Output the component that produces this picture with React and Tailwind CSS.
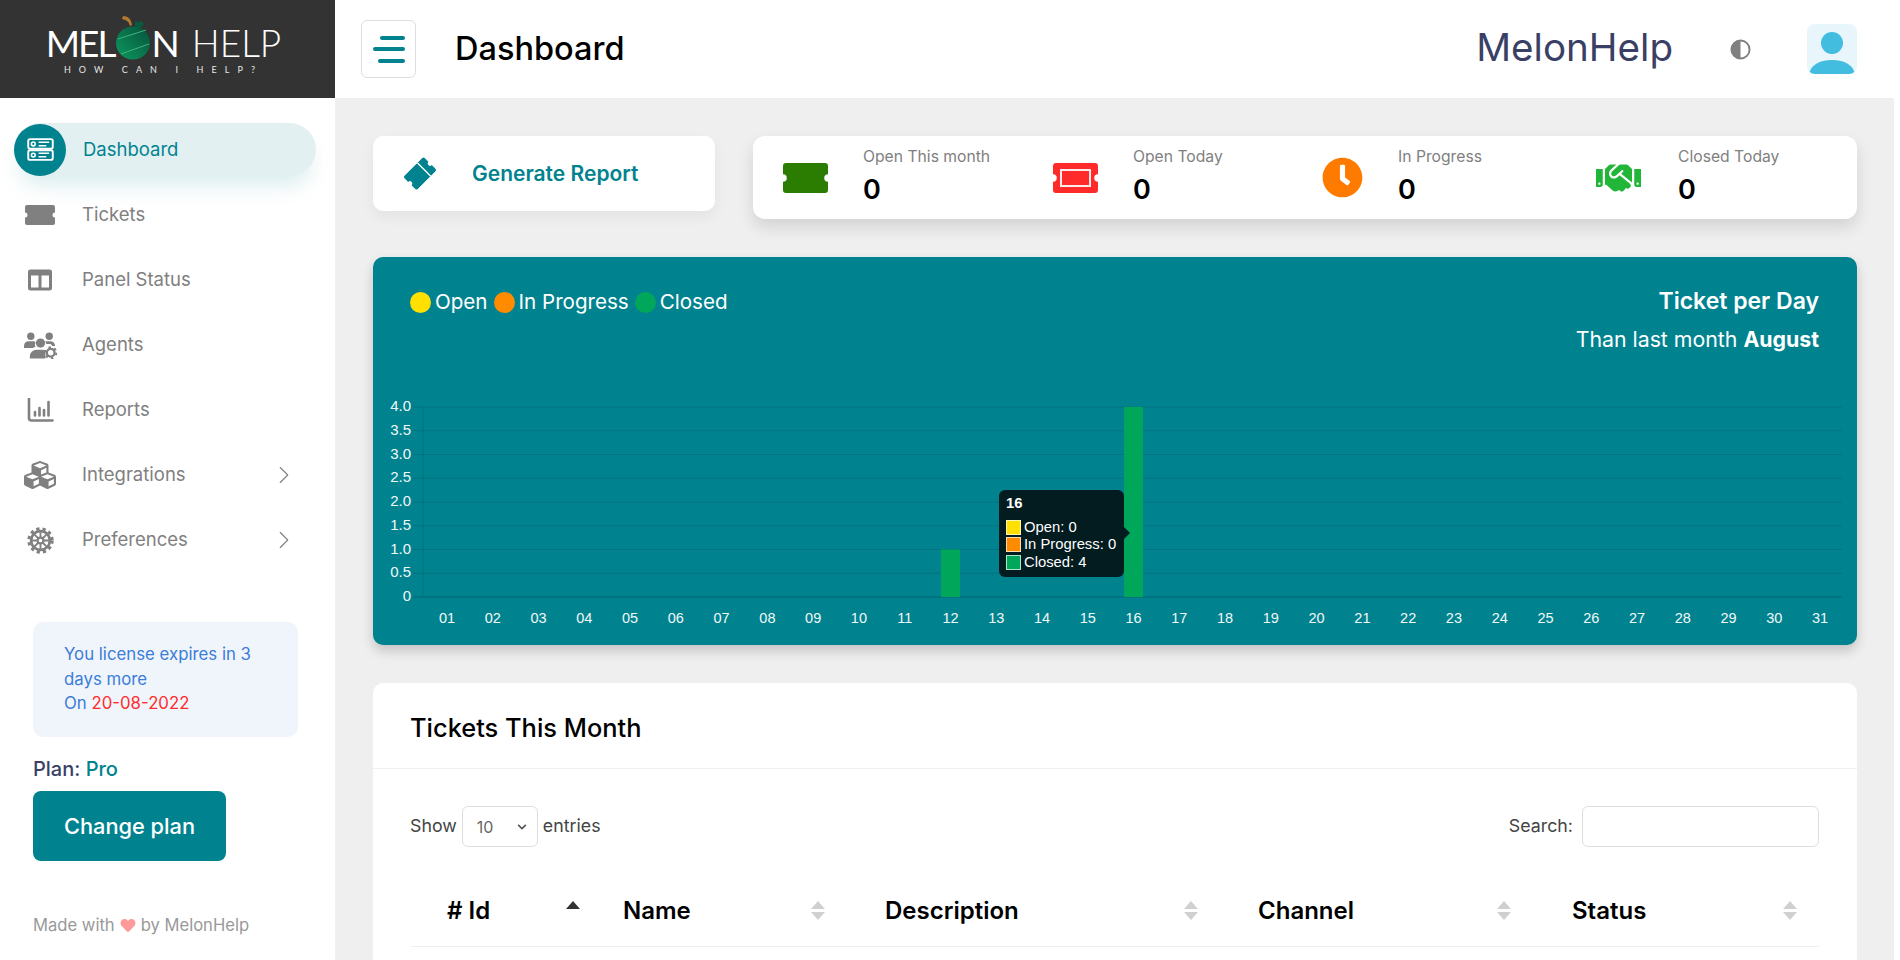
import React from "react";
import { FaCubes, FaColumns, FaClock, FaHandshake, FaHeart, FaChevronDown } from "react-icons/fa";
import { ChevronRight } from "lucide-react";

const poppins = "font-['Inter','Noto_Sans',sans-serif]";

const TicketIcon = ({ className }) => (
  <svg viewBox="0 0 30 20" className={className} fill="currentColor">
    <path d="M2 0h26a2 2 0 0 1 2 2v5.5a2.5 2.5 0 0 0 0 5V18a2 2 0 0 1-2 2H2a2 2 0 0 1-2-2v-5.5a2.5 2.5 0 0 0 0-5V2a2 2 0 0 1 2-2z" />
  </svg>
);

const DashIcon = () => (
  <svg viewBox="0 0 28 24" className="w-[27px] h-[23px]" fill="none" stroke="white">
    <rect x="1.2" y="1.2" width="25.6" height="10" rx="2" strokeWidth="2" />
    <rect x="1.2" y="12.8" width="25.6" height="10" rx="2" strokeWidth="2" />
    <circle cx="6.5" cy="6.2" r="2" strokeWidth="1.6" />
    <circle cx="6.5" cy="17.8" r="2" strokeWidth="1.6" />
    <path d="M12 4.5h11M12 8h8M12 16h11M12 19.5h8" strokeWidth="1.6" />
  </svg>
);

const ReportsIcon = () => (
  <svg viewBox="0 0 26 24" className="w-[27px] h-[24px]" fill="none" stroke="#808080" strokeLinecap="round">
    <path d="M1.5 1v19a2.5 2.5 0 0 0 2.5 2.5h21" strokeWidth="2.6" />
    <path d="M7.5 14v3.5M12 10v7.5M16.5 12v5.5M21 4v13.5" strokeWidth="2.6" />
  </svg>
);

const AgentsIcon = () => (
  <svg viewBox="0 0 34 27" className="w-[33px] h-[27px]" fill="#808080">
    <circle cx="7" cy="4" r="3.8" />
    <circle cx="26" cy="4" r="3.8" />
    <circle cx="17" cy="11" r="4.8" />
    <path d="M0 14c0-3 2-5 5-5h4c1.500 0 2.500.5 3 1.500-1 1.500-1 3 0 4.500-1 0-2 .5-3 1H1a1 1 0 0 1-1-2z" />
    <path d="M6 27v-2c0-4 3-7 7-7h6c1 0 2 .2 3 .7v8.300z" />
    <path d="M22 9h5c3 0 5 2 5 5h-3c-.5-1.500-1.500-2-3-2h-3c0-1-.5-2-1-3z" />
    <circle cx="27.500" cy="21" r="4" fill="none" stroke="#808080" strokeWidth="2.4" />
    <circle cx="27.500" cy="21" r="5.800" fill="none" stroke="#808080" strokeWidth="2" strokeDasharray="2.500 3.580" />
  </svg>
);

const GearIcon = () => (
  <svg viewBox="0 0 26 26" className="w-[27px] h-[27px]" fill="none" stroke="#808080">
    <circle cx="13" cy="13" r="9" strokeWidth="2.6" />
    <circle cx="13" cy="13" r="11.300" strokeWidth="2.800" strokeDasharray="3.100 3" />
    <circle cx="13" cy="13" r="2.800" strokeWidth="2" />
    <path d="M13 5v5M13 16v5M5 13h5M16 13h5M7.300 7.300l3.500 3.500M15.200 15.200l3.500 3.500M18.700 7.300l-3.500 3.500M10.800 15.200l-3.500 3.500" strokeWidth="1.800" />
  </svg>
);

const navItems = [
  { label: "Tickets", icon: <TicketIcon className="w-[30px] h-[20px] text-[#808080]" /> },
  { label: "Panel Status", icon: <FaColumns className="w-[26px] h-[24px] text-[#808080]" /> },
  { label: "Agents", icon: <AgentsIcon /> },
  { label: "Reports", icon: <ReportsIcon /> },
  { label: "Integrations", icon: <FaCubes className="w-[32px] h-[32px] text-[#808080]" />, arrow: true },
  { label: "Preferences", icon: <GearIcon />, arrow: true },
];

const Logo = () => (
  <div className="flex flex-col items-center text-white mr-[8px]">
    <div className="flex items-center h-[30px] font-['Lato',sans-serif] text-[37px] leading-none">
      <span className="font-normal tracking-[-2px]">MEL</span>
      <svg viewBox="0 0 36 44" className="w-[36px] h-[44px] shrink-0 -mt-[9px] ml-px">
        <defs>
          <linearGradient id="melon" x1="0" y1="1" x2="1" y2="0">
            <stop offset="0" stopColor="#0d9a60" />
            <stop offset="1" stopColor="#06503a" />
          </linearGradient>
        </defs>
        <path d="M8 0c5 0 8 3 9 9l-2 1c-1-4-3-6-8-7z" fill="#b07a30" />
        <path d="M20 5l4 1 2-1 3 3-3 4h-6z" fill="#0a5a3e" />
        <ellipse cx="18" cy="27" rx="17" ry="16.500" fill="url(#melon)" />
        <path d="M3 23l28-9M6 38l28-10" stroke="#3fb37f" strokeWidth="1" fill="none" />
      </svg>
      <span className="font-normal tracking-[-1px]">N</span>
      <span className="font-light ml-[13px]">HELP</span>
    </div>
    <div className="font-['Lato',sans-serif] text-[9px] leading-none tracking-[8.1px] mt-[7px] text-[#e6e6e6] whitespace-nowrap">HOW CAN I HELP?</div>
  </div>
);

const Sidebar = () => (
  <aside className="w-[335px] shrink-0 bg-white flex flex-col">
    <div className="h-[98px] bg-[#333333] flex items-center justify-center pt-[3px]">
      <Logo />
    </div>
    <nav className="pt-[25px]">
      <div className="mx-[14px] mb-[6.5px] h-[53px] w-[302px] rounded-full bg-[#e3f0f2] flex items-center shadow-[0_14px_22px_-6px_rgba(0,131,143,0.16)]">
        <div className="w-[52px] h-[52px] rounded-full bg-[#00838f] flex items-center justify-center">
          <DashIcon />
        </div>
        <span className="ml-[17px] text-[18.5px] text-[#00838f]">Dashboard</span>
      </div>
      {navItems.map((item) => (
        <div key={item.label} className="h-[65px] flex items-center pl-[23px]">
          <div className="w-[34px] flex justify-center">{item.icon}</div>
          <span className="ml-[25px] text-[18.5px] text-[#808080] flex-1">{item.label}</span>
          {item.arrow && <ChevronRight className="w-[30px] h-[30px] mr-[36px] text-[#808080]" strokeWidth={0.9} />}
        </div>
      ))}
    </nav>
    <div className="mx-[33px] mt-[49.5px] w-[265px] h-[115px] rounded-[10px] bg-[#f0f5fc] pl-[31px] pr-[20px] pt-[20px] text-[16.8px] leading-[24.5px] text-[#3b7dd8]">
      You license expires in 3 days more
      <br />
      On <span className="text-[#ff2b2b]">20-08-2022</span>
    </div>
    <div className="mx-[33px] mt-[18px] text-[20px] leading-[28px] text-[#3a3f66] font-medium">
      Plan: <span className="text-[#00838f]">Pro</span>
    </div>
    <button className="mx-[33px] mt-[8px] w-[193px] h-[70px] rounded-[8px] bg-[#00838f] text-white text-[21.8px] font-medium">
      Change plan
    </button>
    <div className="mx-[33px] mt-[52px] flex items-center text-[16.6px] text-[#999999]">
      Made with <FaHeart className="w-[16px] h-[15px] mx-[5px] text-[#ff9a9a]" /> by MelonHelp
    </div>
  </aside>
);

const Header = () => (
  <header className="h-[98px] shrink-0 bg-white flex items-center pl-[26px] pr-[37px]">
    <button className="w-[55px] h-[58px] pr-[10px] rounded-[6px] border border-[#dedede] flex flex-col justify-center items-end gap-[7.5px]">
      <span className="w-[25px] h-[4px] rounded-full bg-[#00838f] block" />
      <span className="w-[32px] h-[4px] rounded-full bg-[#00838f] block" />
      <span className="w-[27px] h-[4px] rounded-full bg-[#00838f] block" />
    </button>
    <h1 className="ml-[39px] text-[32.5px] font-medium text-black flex-1">Dashboard</h1>
    <div className="text-[38.6px] text-[#3a3f66] -mt-[3px]">MelonHelp</div>
    <svg viewBox="0 0 22 22" className="w-[21px] h-[21px] ml-[57px]">
      <circle cx="11" cy="11" r="9.500" fill="white" stroke="#808080" strokeWidth="2" />
      <path d="M11 1.500a9.500 9.500 0 0 0 0 19z" fill="#808080" />
    </svg>
    <div className="w-[50px] h-[50px] ml-[56px] rounded-[8px] bg-[#e8f6fc] overflow-hidden">
      <svg viewBox="0 0 50 50" className="w-full h-full">
        <circle cx="25" cy="19" r="11" fill="#42bde0" />
        <path d="M2 50c2-10 12-14 23-14s21 4 23 14z" fill="#42bde0" />
      </svg>
    </div>
  </header>
);

const stats = [
  {
    label: "Open This month",
    icon: <TicketIcon className="w-[45px] h-[30px] text-[#2a7d00]" />,
    gap: "ml-[35px]",
    w: "w-[270px]",
  },
  {
    label: "Open Today",
    icon: (
      <div className="relative w-[45px] h-[30px] text-[#ff2a2a]">
        <TicketIcon className="w-full h-full" />
        <div className="absolute inset-x-[7px] inset-y-[6px] border-2 border-white/90" />
      </div>
    ),
    gap: "ml-[35px]",
    w: "w-[267px]",
  },
  {
    label: "In Progress",
    icon: <FaClock className="w-[41px] h-[41px] text-[#ff7b00]" />,
    gap: "ml-[33px]",
    w: "w-[276px]",
  },
  {
    label: "Closed Today",
    icon: <FaHandshake className="w-[52px] h-[42px] text-[#22b638]" />,
    gap: "ml-[37px]",
    w: "w-[200px]",
  },
];

const StatCards = () => (
  <div className="flex items-start">
    <div className="w-[342px] h-[75px] rounded-[10px] bg-white shadow-[0_6px_14px_rgba(0,0,0,0.05)] flex items-center pl-[31px]">
      <svg viewBox="0 0 30 20" className="w-[32px] h-[19px] text-[#00838f] -rotate-45" fill="currentColor">
        <path d="M2 0h26a2 2 0 0 1 2 2v5.500a2.500 2.500 0 0 0 0 5V18a2 2 0 0 1-2 2H2a2 2 0 0 1-2-2v-5.500a2.500 2.500 0 0 0 0-5V2a2 2 0 0 1 2-2z" />
        <path d="M21 0v20" stroke="white" strokeWidth="1.400" />
      </svg>
      <span className="ml-[36px] text-[21px] font-semibold text-[#00838f]">Generate Report</span>
    </div>
    <div className="ml-[38px] flex-1 h-[83px] rounded-[12px] bg-white shadow-[0_8px_16px_rgba(0,0,0,0.12)] flex items-center pl-[30px]">
      {stats.map((s) => (
        <div key={s.label} className={`${s.w} flex items-center`}>
          <div className="w-[45px] flex justify-center">{s.icon}</div>
          <div className={s.gap}>
            <div className="text-[15.7px] leading-[20px] text-[#808080] mb-[6px] -mt-[2px]">{s.label}</div>
            <div className="text-[27px] leading-[34px] font-semibold text-black">0</div>
          </div>
        </div>
      ))}
    </div>
  </div>
);

const days = Array.from({ length: 31 }, (_, i) => String(i + 1).padStart(2, "0"));
const yLabels = ["4.0", "3.5", "3.0", "2.5", "2.0", "1.5", "1.0", "0.5", "0"];

// chart svg coordinates are relative to the card
const Chart = () => {
  const left = 50;
  const top = 150;
  const step = 23.75;
  const pitch = 45.77;
  return (
    <svg className="w-full h-full absolute inset-0 pointer-events-none" style={{ fontFamily: "Liberation Sans, sans-serif" }}>
      {yLabels.map((l, i) => (
        <g key={l}>
          <line x1={left - 10} x2={1469} y1={top + i * step} y2={top + i * step} stroke={i === 8 ? "#006670" : "#00737e"} strokeWidth="1" />
          <text x={38} y={top + 4 + i * step} textAnchor="end" fontSize="15" fill="#f2f7f8">{l}</text>
        </g>
      ))}
      <line x1={left} x2={left} y1={top} y2={top + 8 * step} stroke="#00737e" />
      {days.map((d, i) => (
        <text key={d} x={74 + i * pitch} y={366} textAnchor="middle" fontSize="14.5" fill="#f2f7f8">{d}</text>
      ))}
      <rect x={568} y={top + 6 * step} width="19" height={2 * step} fill="#00a65a" />
      <rect x={751} y={top} width="19" height={8 * step} fill="#00a65a" />
    </svg>
  );
};

const TooltipRow = ({ color, text }) => (
  <div className="flex items-center h-[17.5px] whitespace-nowrap">
    <span className={`w-[15px] h-[15px] shrink-0 border border-white/70 mr-[3px] ${color}`} />
    <span>{text}</span>
  </div>
);

const ChartCard = () => (
  <div className="relative mt-[38px] h-[388px] rounded-[10px] bg-[#00838f] shadow-[0_6px_12px_rgba(0,0,0,0.18)] text-white px-[38px] pt-[30px]">
    <div className="flex justify-between items-start">
      <div className="flex items-center text-[20.6px] leading-[30px]">
        <span className="w-[21px] h-[21px] rounded-full bg-[#ffe000] mr-[4px] -ml-[1px]" />
        <span className="mr-[6px]">Open</span>
        <span className="w-[21px] h-[21px] rounded-full bg-[#ff8c00] mr-[4px]" />
        <span className="mr-[6px]">In Progress</span>
        <span className="w-[21px] h-[21px] rounded-full bg-[#00a65a] mr-[4px]" />
        <span>Closed</span>
      </div>
      <div className="text-right">
        <div className="text-[23px] font-semibold leading-[28px]">Ticket per Day</div>
        <div className="text-[21.3px] leading-[28px] mt-[10px]">
          Than last month <span className="font-bold">August</span>
        </div>
      </div>
    </div>
    <Chart />
    {/* tooltip sits over the bars */}
    <div className="absolute left-[626px] top-[233px] w-[125px] h-[87px] rounded-[6px] bg-[#021c20] px-[7px] pt-[5px] font-['Liberation_Sans',sans-serif] text-[14.8px] leading-[17.5px]">
      <div className="font-bold mb-[6px]">16</div>
      <TooltipRow color="bg-[#ffe000]" text="Open: 0" />
      <TooltipRow color="bg-[#ff8c00]" text="In Progress: 0" />
      <TooltipRow color="bg-[#00a65a]" text="Closed: 4" />
      <div className="absolute -right-[6px] top-[37px] w-0 h-0 border-y-[6px] border-y-transparent border-l-[6px] border-l-[#021c20]" />
    </div>
  </div>
);

const SortIcon = ({ active }) => (
  <div className="flex flex-col gap-[3px]">
    <span className={`w-0 h-0 border-x-[7px] border-x-transparent border-b-[8px] ${active ? "border-b-[#333333]" : "border-b-[#d0d0d0]"}`} />
    <span className={`w-0 h-0 border-x-[7px] border-x-transparent border-t-[8px] ${active ? "border-t-transparent" : "border-t-[#d0d0d0]"}`} />
  </div>
);

const columns = [
  { label: "# Id", w: "w-[212px]", pl: "pl-[36px]", pr: "pr-[43px]", active: true },
  { label: "Name", w: "w-[262px]", pl: "pl-0", pr: "pr-[60px]" },
  { label: "Description", w: "w-[373px]", pl: "pl-0", pr: "pr-[60px]" },
  { label: "Channel", w: "w-[314px]", pl: "pl-0", pr: "pr-[61px]" },
  { label: "Status", w: "flex-1", pl: "pl-0", pr: "pr-[22px]" },
];

const TicketsCard = () => (
  <div className="mt-[38px] rounded-t-[10px] bg-white flex-1">
    <div className="h-[86px] border-b border-[#f0f0f0] pl-[37px] pt-[5px] flex items-center">
      <h2 className="text-[25.4px] font-medium text-black">Tickets This Month</h2>
    </div>
    <div className="px-[38px]">
      <div className="flex items-center justify-between pt-[37px] text-[17.8px] text-[#444444]">
        <div className="flex items-center -ml-px">
          <span>Show</span>
          <div className="mx-[5px] w-[76px] h-[41px] rounded-[6px] border border-[#dedede] flex items-center justify-between pl-[14px] pr-[10px] text-[#666666] text-[16px]">
            10 <FaChevronDown className="w-[10px] h-[10px] text-[#555555]" />
          </div>
          <span>entries</span>
        </div>
        <div className="flex items-center">
          <span>Search:</span>
          <input className="ml-[9px] w-[237px] h-[41px] rounded-[6px] border border-[#dedede]" />
        </div>
      </div>
      <div className="mt-[38px] h-[62px] flex items-center border-b border-[#f0f0f0] pb-[10px]">
        {columns.map((c) => (
          <div key={c.label} className={`${c.w} ${c.pl} ${c.pr} flex items-center justify-between`}>
            <span className="text-[24px] font-semibold text-black">{c.label}</span>
            <SortIcon active={c.active} />
          </div>
        ))}
      </div>
    </div>
  </div>
);

export default function App() {
  return (
    <div className={`flex w-[1894px] h-[960px] overflow-hidden bg-[#efefef] ${poppins}`}>
      <Sidebar />
      <main className="flex-1 flex flex-col min-w-0">
        <Header />
        <div className="flex-1 flex flex-col pl-[38px] pr-[37px] pt-[38px]">
          <StatCards />
          <ChartCard />
          <TicketsCard />
        </div>
      </main>
    </div>
  );
}
